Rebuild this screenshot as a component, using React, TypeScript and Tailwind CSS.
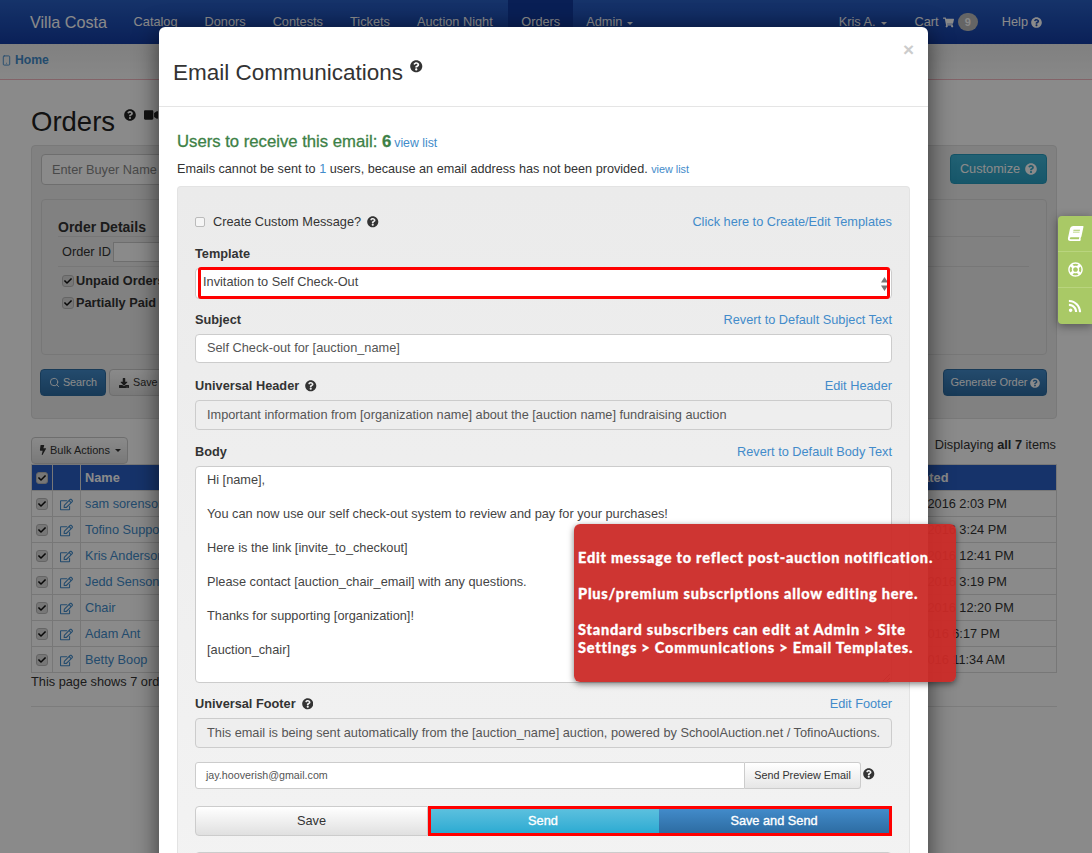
import React from "react";
import { FaQuestionCircle, FaBook, FaRegLifeRing, FaRss, FaShoppingCart, FaRegEdit, FaBolt, FaDownload, FaVideo, FaCheck } from "react-icons/fa";
import { Search, Smartphone } from "lucide-react";

const Caret = () => <span className="ml-[5px] inline-block h-0 w-0 border-x-[3.5px] border-t-[3.5px] border-x-transparent border-t-current align-middle" />;

const Check = () => (
  <span className="flex h-[12px] w-[12px] shrink-0 items-center justify-center rounded-[3px] border border-[#bbb] bg-[#ddd]">
    <FaCheck className="text-[8px] text-[#111]" />
  </span>
);

const rows = [
  ["sam sorenson", "10/24/2016 2:03 PM"],
  ["Tofino Support", "10/24/2016 3:24 PM"],
  ["Kris Anderson", "10/24/2016 12:41 PM"],
  ["Jedd Senson", "10/24/2016 3:19 PM"],
  ["Chair", "10/24/2016 12:20 PM"],
  ["Adam Ant", "9/24/2016 6:17 PM"],
  ["Betty Boop", "9/24/2016 11:34 AM"],
];

const Page = () => (
  <div className="text-[12.75px] text-[#333]">
    <nav className="flex h-[44px] items-center bg-gradient-to-b from-[#295fc4] to-[#143ca2] pl-[30px] text-[#fff]">
      <span className="mr-[13px] text-[16.2px]">Villa Costa</span>
      {["Catalog", "Donors", "Contests", "Tickets", "Auction Night"].map((t) => (
        <span key={t} className="px-[13.5px]">{t}</span>
      ))}
      <span className="ml-[2px] flex h-full items-center bg-[#123a9e] px-[13px]">Orders</span>
      <span className="px-[13px]">Admin<Caret /></span>
      <span className="ml-auto flex items-center pr-[50px]">
        <span>Kris A.<Caret /></span>
        <span className="ml-[28px] flex items-center gap-[4px]">
          Cart <FaShoppingCart className="text-[11px]" />
          <span className="rounded-full bg-[#bbb] px-[7px] py-px text-[11px] font-bold text-white">9</span>
        </span>
        <span className="ml-[24px] flex items-center gap-[3px]">Help <FaQuestionCircle className="text-[11px]" /></span>
      </span>
    </nav>
    <div className="flex h-[36px] items-center gap-[3px] border-b border-[#f2b8c0] bg-gradient-to-b from-[#ededed] to-[#fbfbfb] pb-[3px] pl-[1px] text-[12.2px] font-bold text-[#428bca]">
      <Smartphone size={11} strokeWidth={2} />Home
    </div>
    <div className="pl-[31px] pr-[35px]">
      <div className="flex h-[65px] items-center pt-[18px]">
        <h1 className="text-[27.5px] text-[#222]">Orders</h1>
        <FaQuestionCircle className="mb-[14px] ml-[9px] text-[12px] text-[#222]" />
        <FaVideo className="mb-[14px] ml-[8px] text-[14px] text-[#222]" />
      </div>
      <section className="h-[274px] rounded-[4px] border border-[#e0e0e0] bg-[#eeeeee] px-[9px] pt-[8px]">
        <div className="flex h-[31px] items-start justify-between">
          <div className="flex h-[31px] w-[400px] items-center rounded-[4px] border border-[#ccc] bg-white pl-[10px] text-[#888]">Enter Buyer Name</div>
          <div className="flex h-[30px] w-[97px] items-center justify-center gap-[5px] rounded-[4px] border border-[#269abc] bg-gradient-to-b from-[#3fb4d6] to-[#2aa0c4] text-white">Customize <FaQuestionCircle className="text-[12px]" /></div>
        </div>
        <div className="mt-[14px] h-[156px] rounded-[4px] border border-[#ddd] pl-[16px] pt-[18px]">
          <div className="mr-[26px] flex h-[19px] items-center border-b border-[#ddd] text-[14px] font-bold">Order Details</div>
          <div className="mr-[17px] flex h-[30px] items-center gap-[2px] border-b border-[#ddd] pl-[4px]">
            Order ID <span className="h-[20px] w-[60px] border border-[#ccc] bg-white" />
          </div>
          <label className="mt-[3px] flex h-[22px] items-center gap-[2px] pl-[4px] font-bold"><Check />Unpaid Orders</label>
          <label className="flex h-[22px] items-center gap-[2px] pl-[4px] font-bold"><Check />Partially Paid Orders</label>
        </div>
        <div className="-ml-px mt-[14px] flex items-center">
          <span className="flex h-[27px] w-[66px] items-center justify-center gap-[3px] rounded-[4px] border border-[#2d6ca2] bg-gradient-to-b from-[#428bca] to-[#2d6ca2] text-[10.8px] text-white"><Search size={11} />Search</span>
          <span className="ml-[3px] flex h-[27px] w-[90px] items-center gap-[4px] rounded-[4px] border border-[#ccc] bg-gradient-to-b from-white to-[#e0e0e0] pl-[9px] text-[10.8px]"><FaDownload className="text-[10px]" />Save</span>
          <span className="ml-auto flex h-[27px] w-[104px] items-center justify-center gap-[2px] rounded-[4px] border border-[#2d6ca2] bg-gradient-to-b from-[#428bca] to-[#2d6ca2] text-[11px] text-white">Generate Order <FaQuestionCircle className="text-[10px]" /></span>
        </div>
      </section>
      <div className="mt-[17px] flex h-[28px] items-center justify-between">
        <span className="flex h-[27px] w-[97px] items-center justify-center rounded-[4px] border border-[#ccc] bg-gradient-to-b from-white to-[#e0e0e0] text-[11px]"><FaBolt className="mr-[2px] text-[10px]" />Bulk Actions<Caret /></span>
        <span className="mb-[10px] pr-px">Displaying <b>all 7</b> items</span>
      </div>
      <table className="w-full table-fixed border-collapse">
        <colgroup><col className="w-[21px]" /><col className="w-[28px]" /><col /><col className="w-[177px]" /></colgroup>
        <thead>
          <tr className="h-[26px] bg-[#295fc4] font-bold text-white">
            <th className="border border-[#ddd]"><span className="flex justify-center"><Check /></span></th>
            <th className="border border-[#ddd]" />
            <th className="border border-[#ddd] pl-[4px] text-left">Name</th>
            <th className="border border-[#ddd] pl-[21px] text-left">Created</th>
          </tr>
        </thead>
        <tbody>
          {rows.map(([n, d]) => (
            <tr key={n} className="h-[26px]">
              <td className="border border-[#ddd]"><span className="flex justify-center"><Check /></span></td>
              <td className="border border-[#ddd] text-center text-[#428bca]"><FaRegEdit className="inline-block text-[13px]" /></td>
              <td className="border border-[#ddd] pl-[4px] text-[#428bca]">{n}</td>
              <td className="border border-[#ddd] pl-[12px]">{d}</td>
            </tr>
          ))}
        </tbody>
      </table>
      <p className="-mt-px">This page shows 7 orders</p>
      <div className="mt-[15px] border-t border-[#e5e5e5]" />
    </div>
  </div>
);

const Label = ({ children, link, help, mt }: { children: React.ReactNode; link?: string; help?: boolean; mt: string }) => (
  <div className={`flex h-[16px] items-center justify-between ${mt}`}>
    <span className="flex items-center gap-[6px] font-bold text-[#333]">{children}{help && <FaQuestionCircle className="text-[11.5px]" />}</span>
    {link && <a className="text-[#428bca]">{link}</a>}
  </div>
);

const Field = ({ children, h, off }: { children: React.ReactNode; h: string; off?: boolean }) => (
  <div className={`mt-[6px] flex items-center whitespace-nowrap rounded-[4px] border border-[#ccc] pl-[11px] text-[#555] ${h} ${off ? "bg-[#eeeeee]" : "bg-white pb-[2px]"}`}>{children}</div>
);

const Modal = () => (
  <div className="absolute left-[159px] top-[27px] h-[900px] w-[769px] rounded-[6px] bg-white text-[12.75px] text-[#333] shadow-[0_5px_25px_rgba(0,0,0,0.6)]">
    <header className="relative flex h-[80px] items-center border-b border-[#e5e5e5] pl-[14px]">
      <h2 className="mt-[13px] text-[22.5px] leading-none">Email Communications</h2>
      <FaQuestionCircle className="ml-[7px] text-[12.5px]" />
      <span className="absolute right-[14px] top-[13px] text-[19px] font-bold leading-none text-[#ccc]">×</span>
    </header>
    <div className="px-[18px]">
      <div className="mt-[24px] flex h-[22px] items-center gap-[3px]">
        <span className="text-[16.7px] text-[#3d8146] [-webkit-text-stroke:0.3px_#3d8146]">Users to receive this email: <b>6</b></span>
        <a className="mt-[2px] text-[12.3px] text-[#428bca]">view list</a>
      </div>
      <p className="mt-[8px] h-[16px] text-[12.67px] leading-[16px]">Emails cannot be sent to <span className="text-[#428bca]">1</span> users, because an email address has not been provided. <a className="text-[10.8px] text-[#428bca]">view list</a></p>
      <div className="mt-[9px] rounded-t-[4px] border border-b-0 border-[#e3e3e3] bg-gradient-to-b from-[#ebebeb] to-[#f3f3f3] px-[17px] pb-[17px] pt-[23px]">
        <div className="flex h-[24px] items-center justify-between">
          <span className="flex items-center">
            <span className="h-[10px] w-[10px] rounded-[2px] border border-[#bbb] bg-[#f5f5f5]" />
            <span className="ml-[8px]">Create Custom Message?</span>
            <FaQuestionCircle className="ml-[6px] text-[11.5px]" />
          </span>
          <a className="text-[#428bca]">Click here to Create/Edit Templates</a>
        </div>
        <Label mt="mt-[12px]">Template</Label>
        <div className="relative mt-[6px] flex h-[31px] items-center rounded-[4px] border border-[#ccc] bg-white pb-[4px] pl-[7px] text-[#444]">
          Invitation to Self Check-Out
          <svg className="absolute right-[3px] top-[8px]" width="7" height="14" viewBox="0 0 7 14"><path d="M3.5 0 7 5.5H0zM3.5 14 0 8.5h7z" fill="#777" /></svg>
          <span className="absolute -bottom-px -top-[2px] left-[2px] right-[1px] rounded-[3px] border-[3px] border-[#f00]" />
        </div>
        <Label mt="mt-[13px]" link="Revert to Default Subject Text">Subject</Label>
        <Field h="h-[29px]">Self Check-out for [auction_name]</Field>
        <Label mt="mt-[15px]" help link="Edit Header">Universal Header</Label>
        <Field h="h-[30px]" off>Important information from [organization name] about the [auction name] fundraising auction</Field>
        <Label mt="mt-[14px]" link="Revert to Default Body Text">Body</Label>
        <div className="relative mt-[6px] h-[217px] rounded-[4px] border border-[#ccc] bg-white pl-[11px] pt-[4px] leading-[17px] text-[#444]">
          <p className="mb-[17px]">Hi [name],</p>
          <p className="mb-[17px]">You can now use our self check-out system to review and pay for your purchases!</p>
          <p className="mb-[17px]">Here is the link [invite_to_checkout]</p>
          <p className="mb-[17px]">Please contact [auction_chair_email] with any questions.</p>
          <p className="mb-[17px]">Thanks for supporting [organization]!</p>
          <p>[auction_chair]</p>
          <svg className="absolute bottom-px right-px" width="8" height="8" viewBox="0 0 8 8"><path d="M8 1 1 8M8 5 5 8" stroke="#888" strokeWidth="1" /></svg>
        </div>
        <Label mt="mt-[13px]" help link="Edit Footer">Universal Footer</Label>
        <Field h="h-[30px]" off>This email is being sent automatically from the [auction_name] auction, powered by SchoolAuction.net / TofinoAuctions.</Field>
        <div className="mt-[14px] flex h-[27px] items-center">
          <div className="flex h-full w-[550px] items-center rounded-l-[3px] border border-[#ccc] bg-white pl-[10px] text-[10.7px] text-[#555]">jay.hooverish@gmail.com</div>
          <span className="flex h-full w-[116px] items-center justify-center rounded-r-[3px] border border-l-0 border-[#ccc] bg-gradient-to-b from-white to-[#e6e6e6] text-[10.8px]">Send Preview Email</span>
          <FaQuestionCircle className="mb-[3px] ml-[2px] text-[11.5px]" />
        </div>
        <div className="mt-[17px] flex h-[30px] items-stretch">
          <span className="flex w-[233px] items-center justify-center rounded-l-[4px] border border-[#ccc] bg-gradient-to-b from-white to-[#e0e0e0]">Save</span>
          <div className="flex flex-1 border-[3px] border-[#f00] text-white [-webkit-text-stroke:0.35px_#fff]">
            <span className="flex w-[228px] items-center justify-center bg-gradient-to-b from-[#5bc0de] to-[#2aabd2] pr-[4px]">Send</span>
            <span className="flex flex-1 items-center justify-center bg-gradient-to-b from-[#428bca] to-[#2d6ca2]">Save and Send</span>
          </div>
        </div>
        <div className="mt-[16px] h-[30px] rounded-[4px] border border-[#ccc] bg-white" />
      </div>
    </div>
  </div>
);

export default function App() {
  return (
    <div className="relative h-[853px] w-[1092px] overflow-hidden bg-[#fff] [font-family:'Liberation_Sans',Arial,sans-serif]">
      <Page />
      <div className="absolute inset-0 bg-black/[0.46]" />
      <aside className="absolute right-0 top-[216px] flex h-[108px] w-[34px] flex-col rounded-l-[4px] bg-[#a9c966] text-[15px] text-white shadow-[0_2px_10px_rgba(0,0,0,0.4)]">
        <span className="flex h-[36px] items-center justify-center border-b border-[#b9d47e]"><FaBook className="-skew-x-12" /></span>
        <span className="flex h-[36px] items-center justify-center border-b border-[#b9d47e]"><FaRegLifeRing /></span>
        <span className="flex h-[36px] items-center justify-center"><FaRss className="text-[14px]" /></span>
      </aside>
      <Modal />
      <div className="absolute left-[574px] top-[524px] flex h-[158px] w-[382px] flex-col justify-center rounded-[6px] bg-[#cb2a27]/[0.95] pl-[4px] text-[14.5px] font-black leading-[18px] tracking-[0.8px] text-white shadow-[0_2px_6px_rgba(0,0,0,0.5)] [-webkit-text-stroke:0.3px_#fff] [font-family:'Lato',sans-serif]">
        <p className="mb-[18px]">Edit message to reflect post-auction notification.</p>
        <p className="mb-[18px]">Plus/premium subscriptions allow editing here.</p>
        <p>Standard subscribers can edit at Admin &gt; Site<br />Settings &gt; Communications &gt; Email Templates.</p>
      </div>
    </div>
  );
}
